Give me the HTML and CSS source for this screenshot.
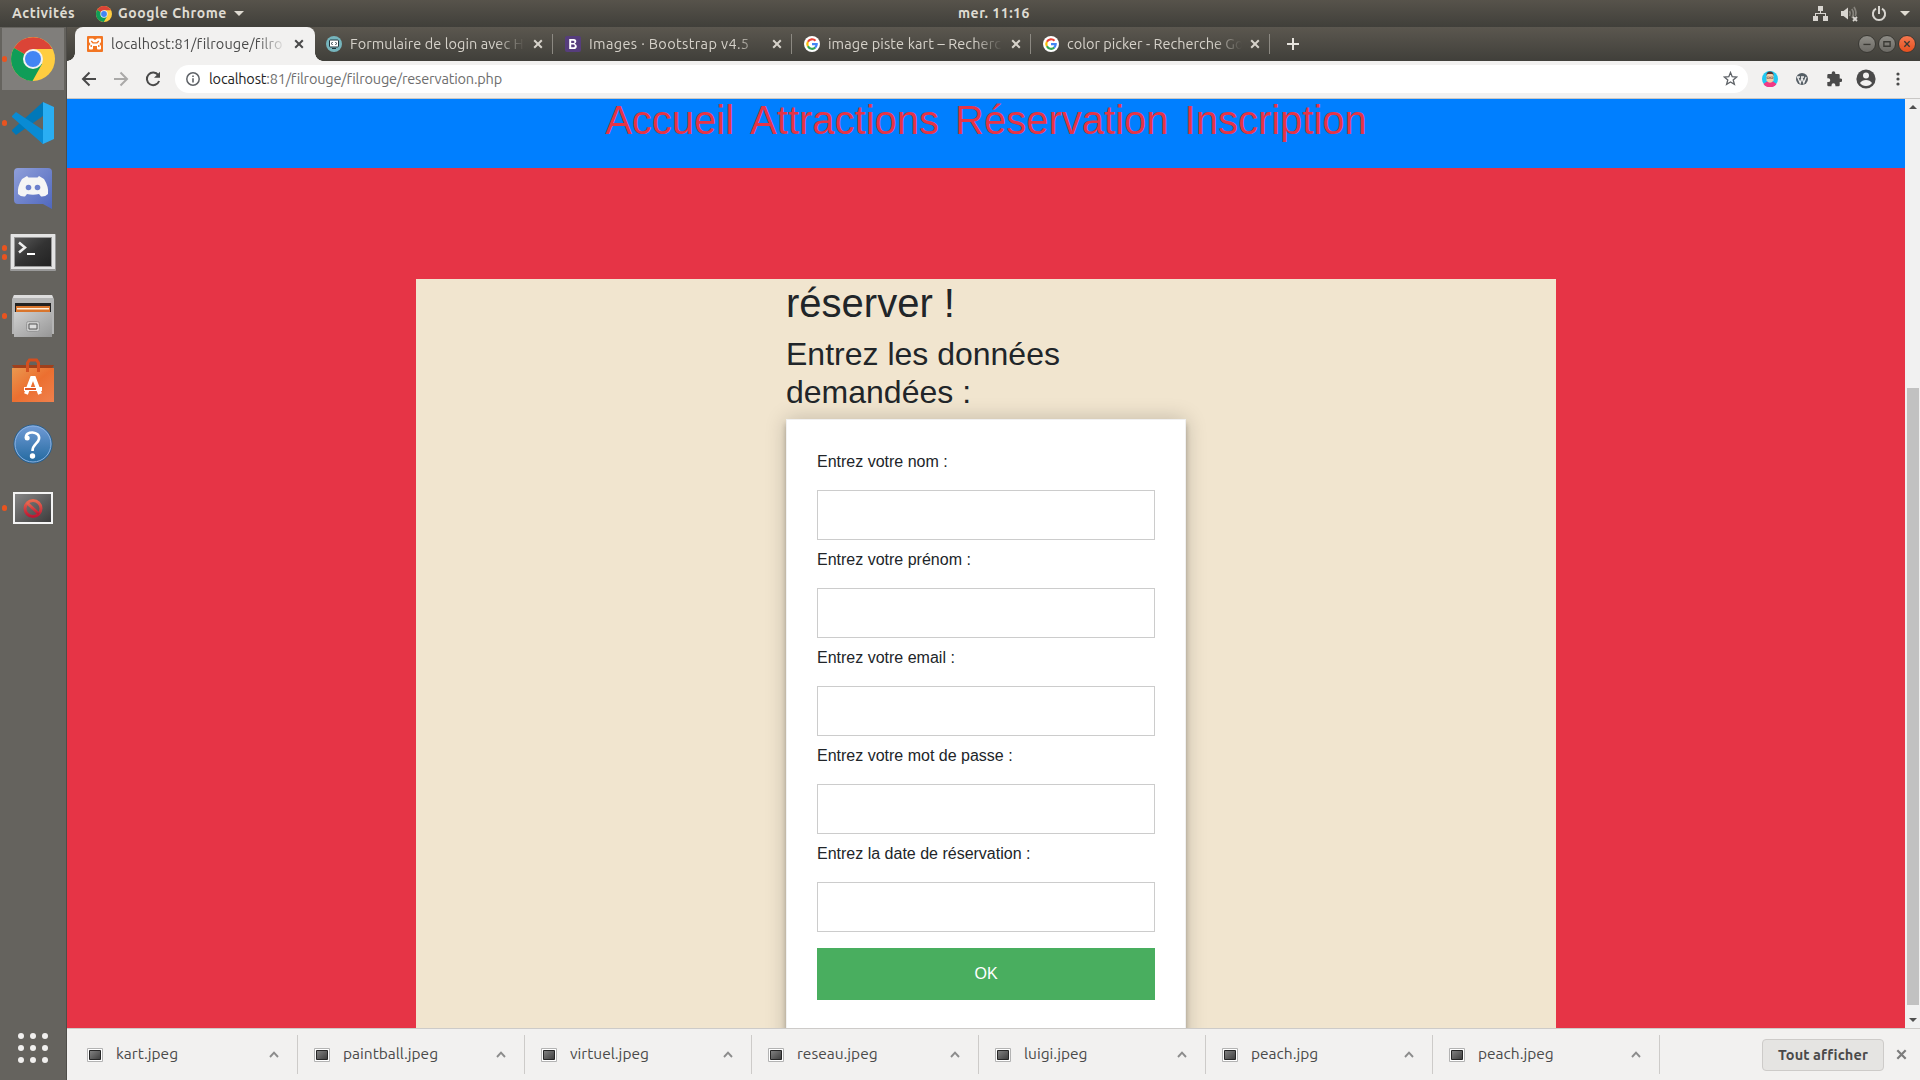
FILE: index.html
```html
<!DOCTYPE html>
<html lang="fr">
<head>
<meta charset="utf-8">
<title>Réservation</title>
<link rel="stylesheet" href="styles.css">
</head>
<body>
<svg class="defs" width="0" height="0">
  <defs>
    <linearGradient id="term" x1="0" y1="0" x2="1" y2="1"><stop offset="0" stop-color="#5a5a5a"/><stop offset=".5" stop-color="#333"/><stop offset="1" stop-color="#222"/></linearGradient>
    <linearGradient id="thumbnail" x1="0" y1="0" x2="1" y2="1"><stop offset="0" stop-color="#858585"/><stop offset="1" stop-color="#3c3c3c"/></linearGradient>
    <linearGradient id="metal" x1="0" y1="0" x2="1" y2="1"><stop offset="0" stop-color="#d0d0d0"/><stop offset="1" stop-color="#969696"/></linearGradient>
    <linearGradient id="bag" x1="0" y1="0" x2="1" y2="1"><stop offset="0" stop-color="#ea984f"/><stop offset=".5" stop-color="#ec6f30"/><stop offset="1" stop-color="#f0814d"/></linearGradient>
    <linearGradient id="help" x1="0" y1="0" x2="0" y2="1"><stop offset="0" stop-color="#719bd6"/><stop offset="1" stop-color="#22699f"/></linearGradient>
    <linearGradient id="disc" x1="0" y1="0" x2="1" y2="1"><stop offset="0" stop-color="#8f9fda"/><stop offset="1" stop-color="#4f67be"/></linearGradient>
    <linearGradient id="ban" x1="0" y1="0" x2="0" y2="1"><stop offset="0" stop-color="#e8694f"/><stop offset="1" stop-color="#bd1733"/></linearGradient>
    <symbol id="chrome" viewBox="0 0 44 44">
      <circle cx="22" cy="22" r="22" fill="#ffcd40"/>
      <path d="M22 22 3 11A22 22 0 0 1 41.300 12H22z" fill="#db4437"/>
      <path d="M3 11A22 22 0 0 0 21.500 44L31 27 22 22z" fill="#0f9d58"/>
      <circle cx="22" cy="22" r="10" fill="#f1f1f1"/><circle cx="22" cy="22" r="8" fill="#4285f4"/>
    </symbol>
    <symbol id="google" viewBox="0 0 16 16">
      <circle cx="8" cy="8" r="8" fill="#fff"/>
      <g fill="none" stroke-width="2.200"><path d="M3.900 5.700A4.700 4.700 0 0 1 11.500 4.800" stroke="#ea4335"/><path d="M3.900 5.700A4.700 4.700 0 0 0 3.900 10.300" stroke="#fbbc05"/><path d="M3.900 10.300A4.700 4.700 0 0 0 11.300 11.500" stroke="#34a853"/><path d="M11.200 11.600A4.700 4.700 0 0 0 12.700 8.100H8" stroke="#4285f4"/></g>
    </symbol>
    <symbol id="close" viewBox="0 0 10 10"><path d="m1.200 1.200 7.600 7.600m0-7.600L1.200 8.800" fill="none" stroke="currentColor" stroke-width="2"/></symbol>
    <symbol id="file" viewBox="0 0 16 14"><path fill="#fff" stroke="#b3b3b3" d="M.5.500h15v13H.5z"/><path d="M2.500 2.500h11v9h-11z" fill="url(#thumbnail)" stroke="#262626"/></symbol>
    <symbol id="chev" viewBox="0 0 10 7"><path d="m1 6 4-4.300L9 6" fill="none" stroke="#8c8c8c" stroke-width="1.900"/></symbol>
  </defs>
</svg>

<header class="topbar">
  <span class="activities">Activités</span>
  <svg class="app-icon"><use href="#chrome"/></svg>
  <span class="app-name">Google Chrome</span>
  <i class="caret"></i>
  <span class="clock">mer. 11:16</span>
  <div class="tray">
    <svg width="15" height="15" viewBox="0 0 15 15" fill="#d8d5d0"><path d="M5 0h5v5H5zM0 10h5v5H0zM10 10h5v5h-5zM7 5h1v3H7zM2 7h11v1H2zM2 7h1v3H2zM12 7h1v3h-1z"/></svg>
    <svg width="17" height="16" viewBox="0 0 17 16" fill="none"><path d="M0 5h2.500L7 1.500v12L2.500 10H0z" fill="#d8d5d0"/><path d="M8.500 5q1.500 2.500 0 5M10.800 3q3 4 .2 9M13 1q3 5 1.300 9" stroke="#85827b" stroke-width="1.700"/><path d="m12 11 4 4m0-4-4 4" stroke="#d8d5d0" stroke-width="1.800"/></svg>
    <svg width="16" height="16" viewBox="0 0 16 16" fill="none" stroke="#d8d5d0" stroke-width="2"><path d="M8 0v8M5 2.700a6.100 6.100 0 1 0 6 0"/></svg>
    <i class="caret"></i>
  </div>
</header>

<aside class="dock">
  <div class="app active"><span class="run"><b></b></span><svg width="44" height="44"><use href="#chrome"/></svg></div>
  <div class="app"><span class="run"><b></b></span>
    <svg width="42" height="42" viewBox="0 0 42 42"><path d="M31 0 0 28v1l4 4 27-19z" fill="#0078b9"/><path d="m31 0 11 5v32l-11 5-5-6 5-6z" fill="#2aaef3"/><path d="M4 10 0 14v1l31 27V28z" fill="#098bd4"/></svg></div>
  <div class="app lower">
    <svg width="38" height="41" viewBox="0 0 38 41"><path d="M4 0h30q4 0 4 4v37l-9-5H4q-4 0-4-4V4q0-4 4-4z" fill="url(#disc)"/><path d="m8 11 5-3 1.500 1.500h9L25 8l5 3q5 8 4 15-3 3-7 2.500l-2-2.500q-6 1.500-12 0l-2 2.500Q7 29 4 26q-1-7 4-15z" fill="#f5f5f5"/><circle cx="14.500" cy="19.500" r="2.800" fill="#6c80cd"/><circle cx="23.500" cy="19.500" r="2.800" fill="#6c80cd"/></svg></div>
  <div class="app"><span class="run"><b></b><b></b></span>
    <svg width="46" height="38" viewBox="0 0 46 38"><rect width="46" height="37" rx="1" y="1" fill="#999"/><rect width="44" height="35" x="1" y="1" fill="#e4e4e4"/><path d="M4 4h38v30H4z" fill="#999"/><path d="M5 5h36v28H5z" fill="url(#term)"/><path d="m9 9.500 6 5-6 5" fill="none" stroke="#eee" stroke-width="2.500"/><path d="M17 20h8v2h-8z" fill="#fff"/></svg></div>
  <div class="app"><span class="run"><b></b></span>
    <svg width="42" height="44" viewBox="0 0 42 44"><path d="M2 1h38l2 4v35H0V5z" fill="#b4b4b4"/><path d="M2 1h38l1 3H1z" fill="#ddd"/><path d="M3 9h36v10H3z" fill="#222"/><path d="M4 12h34v7H4z" fill="#d9752c"/><path d="M5 14h32v1.500H5z" fill="#fff0dc"/><path d="M2 18h38v25H2z" fill="url(#metal)"/><rect x="14.500" y="27.500" width="13" height="10" rx="2" fill="#c9c9c9" stroke="#999"/><path d="M17 30h8v5h-8z" fill="#ddd" stroke="#555"/></svg></div>
  <div class="app">
    <svg width="42" height="44" viewBox="0 0 42 44"><path d="M0 7h42l-3 5H3z" fill="#9f401c"/><path d="M0 10h42v34H0z" fill="url(#bag)"/><path d="M15.500 14V5l2-3h7l2 3v9" fill="none" stroke="#d34f20" stroke-width="3"/><path d="m14 36 6-16h2l6 16" fill="none" stroke="#fff" stroke-width="4"/><path d="M12 29h18v4H12z" fill="#fff"/><path d="M13 30h11v2H13z" fill="#e25a28"/></svg></div>
  <div class="app">
    <svg width="40" height="40" viewBox="0 0 40 40"><circle cx="20" cy="20" r="19" fill="url(#help)" stroke="#225e91"/><circle cx="20" cy="20" r="18" fill="none" stroke="#8eb2e0"/><path d="M13 14C12 6 27.500 7 26 15c-1 5-6.500 5-6.500 12" fill="none" stroke="#fff" stroke-width="2.600"/><circle cx="14.200" cy="14" r="2.500" fill="#fff"/><circle cx="19.500" cy="32" r="2.700" fill="#fff"/></svg></div>
  <div class="app"><span class="run"><b></b></span>
    <svg width="40" height="32" viewBox="0 0 40 32"><path d="M0 0h40v32H0z" fill="#f4f4f4"/><path d="M2 2h36v28H2z" fill="url(#thumbnail)"/><g fill="none" stroke="url(#ban)" stroke-width="3"><circle cx="20" cy="16.500" r="8"/><path d="m14 11 12 11"/></g></svg></div>
  <svg class="grid-btn" width="30" height="30" viewBox="0 0 30 30" fill="#f1f0ef"><circle cx="3" cy="3" r="3"/><circle cx="15" cy="3" r="3"/><circle cx="27" cy="3" r="3"/><circle cx="3" cy="15" r="3"/><circle cx="15" cy="15" r="3"/><circle cx="27" cy="15" r="3"/><circle cx="3" cy="27" r="3"/><circle cx="15" cy="27" r="3"/><circle cx="27" cy="27" r="3"/></svg>
</aside>

<main class="browser">
  <div class="tabs">
    <div class="tab current">
      <svg class="fav" viewBox="0 0 16 16"><rect width="16" height="16" rx="1" fill="#f37623"/><path d="M3 2.500h3L8 4l2-1.500h3q1 0 1 1V6l-1.500 2 1.500 2v2.500q0 1-1 1h-2q-1 0-1-1V10H6v2.500q0 1-1 1H3q-1 0-1-1V10l1.500-2L2 6V3.500q0-1 1-1z" fill="#fff"/><path d="M4.200 5 6 6.800h4L11.800 5M4.200 11V9m7.600 2V9" fill="none" stroke="#f37623" stroke-width="1.300"/></svg>
      <span class="title t1">localhost:81/filrouge/filro</span><svg class="x"><use href="#close"/></svg></div>
    <div class="tab">
      <svg class="fav" viewBox="0 0 16 16"><circle cx="8" cy="8" r="8" fill="#76b5bd"/><rect x="3.500" y="4" width="9" height="7" rx="1" fill="#fff" stroke="#24363e"/><path d="m6.500 6-1 1.500 1 1.500m3-3 1 1.500-1 1.500M6 12.500h4" stroke="#24363e" fill="none"/></svg>
      <span class="title t2">Formulaire de login avec H</span><svg class="x"><use href="#close"/></svg></div>
    <div class="tab">
      <svg class="fav" viewBox="0 0 16 16"><rect width="16" height="16" rx="2" fill="#563d7c"/><path fill-rule="evenodd" d="M4.200 3h4.600q2.600.200 2.500 2.500-.1 1.600-1.600 2.200 2 .500 2.100 2.500Q11.700 13 8.900 13H4.200zM6.200 4.700v2.400h2.200q1.100-.2 1.100-1.200t-1.100-1.200zm0 3.900v2.700h2.400q1.200-.2 1.200-1.400T8.600 8.600z" fill="#fff"/></svg>
      <span class="title t3">Images · Bootstrap v4.5</span><svg class="x"><use href="#close"/></svg></div>
    <div class="tab"><svg class="fav"><use href="#google"/></svg><span class="title t4">image piste kart – Recherc</span><svg class="x"><use href="#close"/></svg></div>
    <div class="tab"><svg class="fav"><use href="#google"/></svg><span class="title t5">color picker - Recherche Go</span><svg class="x"><use href="#close"/></svg></div>
    <svg class="plus" width="12" height="12" viewBox="0 0 12 12"><path d="M6 0v12M0 6h12" stroke="#e6e3dd" stroke-width="2"/></svg>
    <div class="winctl">
      <i class="wb"><svg viewBox="0 0 18 18"><path d="M5 9.500h8"/></svg></i>
      <i class="wb"><svg viewBox="0 0 18 18"><path d="M5.500 6.500h7v5h-7z"/></svg></i>
      <i class="wb red"><svg viewBox="0 0 18 18"><path d="m6 6 6 6m0-6-6 6"/></svg></i>
    </div>
  </div>

  <div class="toolbar">
    <svg class="nav-icon" viewBox="0 0 16 16"><path d="M15 8H2m6.500-6.500L2 8l6.500 6.500"/></svg>
    <svg class="nav-icon off" viewBox="0 0 16 16"><path d="M1 8h13M7.500 1.500 14 8l-6.500 6.500"/></svg>
    <svg class="nav-icon" viewBox="0 0 16 16"><path d="M13.300 4.200A6.300 6.300 0 1 0 14.100 10"/><path d="M15 .8v6H9z" fill="#4a4a4a" stroke="none"/></svg>
    <div class="url">
      <svg width="14" height="14" viewBox="0 0 14 14"><circle cx="7" cy="7" r="6.200" fill="none" stroke="#5f6368" stroke-width="1.500"/><path d="M6.200 6.200h1.600v4.300H6.200zM6.200 3.400h1.600V5H6.200z" fill="#5f6368"/></svg>
      <span class="address"><b>localhost</b>:81/filrouge/filrouge/reservation.php</span>
      <svg class="star" width="15" height="15" viewBox="0 0 15 15"><path d="m7.500 1.500 1.700 4.200 4.500.3-3.500 2.900 1.200 4.500-3.900-2.500-3.900 2.500 1.200-4.500L1.300 6l4.500-.3z" fill="none" stroke="#5f6368" stroke-width="1.300"/></svg>
    </div>
    <div class="ext">
      <svg width="16" height="16" viewBox="0 0 16 16"><circle cx="8" cy="8" r="8" fill="#1fc8f2"/><path d="M1.500 13q3-3 6.500-3t6.500 3A8 8 0 0 1 1.500 13z" fill="#f23985"/><path d="M4.500 3h7v6.500q-3.500 4.500-7 0z" fill="#f7cda4"/><path d="M4.500 5Q4 .5 8 .5t3.500 4.500L10.500 3h-5z" fill="#543336"/><path d="M5 6h2.500v1.500H5zm3.500 0H11v1.500H8.500z" fill="none" stroke="#8d6658" stroke-width=".7"/></svg>
      <svg width="12" height="12" viewBox="0 0 12 12"><circle cx="6" cy="6" r="6" fill="#555e65"/><path d="m1.500 4 2.700 6L6 5l1.800 5 2.300-6M1 4h3m1 0h3" fill="none" stroke="#eee" stroke-width="1.300"/></svg>
      <svg width="16" height="16" viewBox="0 0 16 16"><path d="M14.700 7.500h-1V4.200q0-1.200-1.200-1.200H9.300V2a1.800 1.800 0 0 0-3.600 0v1H2.500Q1.300 3 1.300 4.200v3h1a1.900 1.900 0 0 1 0 3.900h-1v3q0 1.200 1.200 1.200h3v-1a1.900 1.900 0 0 1 3.900 0v1h3.100q1.200 0 1.200-1.200V11h1a1.750 1.750 0 0 0 0-3.500z" fill="#4a4a4a"/></svg>
      <svg width="20" height="20" viewBox="0 0 20 20"><circle cx="10" cy="10" r="9.600" fill="#4a4a4a"/><circle cx="10" cy="6.500" r="3" fill="#f2f1f0"/><path d="M4 14q2-3 6-3t6 3q-2 3-6 3t-6-3z" fill="#f2f1f0"/></svg>
      <svg width="4" height="14" viewBox="0 0 4 14" fill="#4a4a4a"><circle cx="2" cy="2" r="1.600"/><circle cx="2" cy="7" r="1.600"/><circle cx="2" cy="12" r="1.600"/></svg>
    </div>
  </div>

  <div class="viewport">
    <div class="page">
      <nav class="menu"><a>Accueil</a><a>Attractions</a><a>Réservation</a><a>Inscription</a></nav>
      <section class="container">
        <div class="booking">
          <h1>réserver !</h1>
          <h2>Entrez les données demandées :</h2>
          <form class="card">
            <label>Entrez votre nom :</label><input type="text">
            <label>Entrez votre prénom :</label><input type="text">
            <label>Entrez votre email :</label><input type="text">
            <label>Entrez votre mot de passe :</label><input type="text">
            <label>Entrez la date de réservation :</label><input type="text">
            <button type="button">OK</button>
          </form>
        </div>
      </section>
    </div>
    <div class="scrollbar"><i class="up"></i><i class="thumb"></i><i class="down"></i></div>
  </div>

  <footer class="downloads">
    <div class="dl"><svg class="file"><use href="#file"/></svg><span>kart.jpeg</span><svg class="chev"><use href="#chev"/></svg></div>
    <div class="dl"><svg class="file"><use href="#file"/></svg><span>paintball.jpeg</span><svg class="chev"><use href="#chev"/></svg></div>
    <div class="dl"><svg class="file"><use href="#file"/></svg><span>virtuel.jpeg</span><svg class="chev"><use href="#chev"/></svg></div>
    <div class="dl"><svg class="file"><use href="#file"/></svg><span>reseau.jpeg</span><svg class="chev"><use href="#chev"/></svg></div>
    <div class="dl"><svg class="file"><use href="#file"/></svg><span>luigi.jpeg</span><svg class="chev"><use href="#chev"/></svg></div>
    <div class="dl"><svg class="file"><use href="#file"/></svg><span>peach.jpg</span><svg class="chev"><use href="#chev"/></svg></div>
    <div class="dl"><svg class="file"><use href="#file"/></svg><span>peach.jpeg</span><svg class="chev"><use href="#chev"/></svg></div>
    <div class="show-all">Tout afficher</div>
    <svg class="x"><use href="#close"/></svg>
  </footer>
</main>
</body>
</html>
```
FILE: styles.css
```css
* { box-sizing: border-box; }
body {
  margin: 0; width: 1920px; height: 1080px; overflow: hidden;
  display: grid; grid-template: 27px 1053px / 67px 1853px;
  font-family: Ubuntu, "Noto Sans", sans-serif; font-size: 15.5px; color: #4a4a4a;
}
svg { display: block; flex: none; }
.defs { position: absolute; }
i, b { font-style: normal; font-weight: normal; }

.topbar {
  grid-column: 1 / 3; display: grid; align-items: center;
  grid-template-columns: 84px 22px 116px 724px 1fr auto;
  padding: 0 10px 0 12px;
  background: linear-gradient(#57534b, #403f3a);
  color: #dfdbd2; font-size: 14px; font-weight: 600; line-height: 27px; white-space: nowrap;
}
.app-icon { width: 16px; height: 16px; }
.activities { letter-spacing: .55px; }
.app-name { letter-spacing: .55px; }
.clock { letter-spacing: .5px; }
.caret { width: 0; border: 5px solid transparent; border-top-color: #dfdbd2; border-bottom: 0; }
.tray { display: flex; align-items: center; gap: 13px; }

.dock {
  display: flex; flex-direction: column; background: #65635e;
  border-right: 1px solid #4f4d49;
}
.app { height: 64px; flex: none; display: grid; grid-template-columns: 9px 48px; align-items: center; }
.app > svg { grid-column: 2; justify-self: center; }
.lower { margin-top: 1px; }
.active { background: linear-gradient(#807e7b, #807e7b) 2px 1px / 62px 62px no-repeat; }
.run { display: flex; flex-direction: column; gap: 3px; padding-left: 2px; }
.run b { width: 5px; height: 6px; border-radius: 3px; background: #e95420; }
.grid-btn { margin: auto 0 17px 18px; }

.browser { display: flex; flex-direction: column; min-width: 0; }
.tabs {
  height: 34px; flex: none; display: flex; align-items: center; padding-left: 8px;
  background: linear-gradient(#5b574f, #403f3a); color: #d6d2ca;
}
.tab { width: 239px; height: 34px; flex: none; display: flex; align-items: center; padding: 0 10px 0 12px; background: linear-gradient(#8c8982, #8c8982) right 7px / 1px 20px no-repeat; }
.tab.current { background: #f2f1f0; color: #4a4a4a; border-radius: 8px 8px 0 0; width: 240px; margin-right: -1px; padding-right: 11px; position: relative; }
.current::before, .current::after {
  content: ""; position: absolute; bottom: 0; width: 8px; height: 8px;
}
.current::before { left: -8px; background: radial-gradient(circle at 0 0, transparent 7.5px, #f2f1f0 8px); }
.current::after { right: -8px; background: radial-gradient(circle at 100% 0, transparent 7.5px, #f2f1f0 8px); }
.fav { width: 16px; height: 16px; }
.title {
  width: 176px; margin: 0 7px 0 8px; white-space: nowrap; font-size: 14.5px; line-height: 30px;
  -webkit-mask-image: linear-gradient(90deg, #000 146px, transparent 175px); mask-image: linear-gradient(90deg, #000 146px, transparent 175px);
}
.t1 { letter-spacing: .1px; }
.t2 { letter-spacing: .06px; }
.t3 { letter-spacing: .36px; }
.t4 { letter-spacing: .1px; }
.x { width: 10px; height: 10px; }
.plus { margin-left: 17px; }
.winctl { display: flex; gap: 2px; margin-left: auto; padding-right: 4px; }
.wb { width: 18px; height: 18px; border-radius: 50%; border: 1px solid #3a3934; background: linear-gradient(#8e8c86, #6c6a65); }
.wb svg { width: 16px; height: 16px; fill: none; stroke: #3a3934; stroke-width: 1.5; }
.wb.red { background: linear-gradient(#f5784f, #e6501f); }

.toolbar {
  height: 38px; flex: none; display: flex; align-items: center; padding: 0 20px 2px 14px;
  background: #f2f1f0; border-bottom: 1px solid #c9c7c5;
}
.nav-icon { width: 16px; height: 16px; margin-right: 16px; fill: none; stroke: #4a4a4a; stroke-width: 2; }
.off { stroke: #aaa9a8; }
.url { width: 1573px; height: 28px; margin-left: -2px; padding: 0 10px 0 11px; border-radius: 14px; background: #fff; display: flex; align-items: center; }
.address { margin-left: 9px; font-size: 14.5px; letter-spacing: -.19px; color: #6e6e6e; }
.address b { color: #222; }
.star { margin-left: auto; }
.ext { flex: 1; margin: 0 -20px 0 6px; display: grid; grid-template-columns: repeat(5, 32px); justify-items: center; align-items: center; }

.viewport { height: 929px; flex: none; display: flex; overflow: hidden; }
.page { width: 1838px; background: #e63446; font-family: "Liberation Sans", Arial, sans-serif; color: #212529; overflow: hidden; }
.menu { height: 69px; background: #007fff; color: #e63446; display: flex; justify-content: center; gap: 16px; font-size: 40px; line-height: 42px; }
.container { width: 1140px; height: 900px; margin: 111px auto 0; background: #f1e5cf; }
.booking { width: 400px; margin: 0 auto; }
h1, h2 { margin: 0; font-weight: normal; line-height: 1.2; }
h1 { font-size: 40px; padding-bottom: 8px; height: 56px; }
h2 { font-size: 32px; height: 84px; }
.card {
  display: flex; flex-direction: column; height: 700px; padding: 30px; background: #fff;
  border: 1px solid #f1f1f1; box-shadow: 0 0 20px rgba(0,0,0,.2), 0 5px 5px rgba(0,0,0,.24);
  font-size: 16px; line-height: 24px;
}
.card input { height: 50px; margin: 16px 0 8px; border: 1px solid #ccc; background: #fff; }
.card button { height: 52px; margin-top: 8px; border: 0; background: #49ae5f; color: #fff; font: 16px "Liberation Sans", Arial, sans-serif; }

.scrollbar { width: 15px; background: #f1f1f1; display: flex; flex-direction: column; align-items: center; padding: 6px 0; }
.up, .down { border: 4px solid transparent; }
.up { border-bottom-color: #505050; border-top: 0; margin-bottom: 279px; }
.thumb { width: 12px; height: 617px; background: #c1c1c1; }
.down { border-top-color: #505050; border-bottom: 0; margin-top: 13px; }

.downloads { height: 52px; flex: none; display: flex; align-items: center; background: #f2f1f0; border-top: 1px solid #cdcbc9; padding-left: 4px; }
.dl { width: 227px; height: 39px; display: flex; align-items: center; padding: 0 18px 0 16px; border-right: 1px solid #cdcbc9; line-height: 20px; }
.dl span { margin-top: -2px; }
.file { width: 16px; height: 14px; margin-right: 13px; }
.chev { width: 10px; height: 7px; margin-left: auto; }
.show-all { margin-left: auto; width: 122px; height: 32px; border: 1px solid #cdcbc9; border-radius: 4px; background: #e5e4e2; text-align: center; line-height: 29px; font-size: 14.5px; font-weight: 600; letter-spacing: .1px; white-space: nowrap; }
.downloads > .x { width: 11px; height: 11px; margin: 0 13px 0 12px; color: #7c7c7c; }
```
